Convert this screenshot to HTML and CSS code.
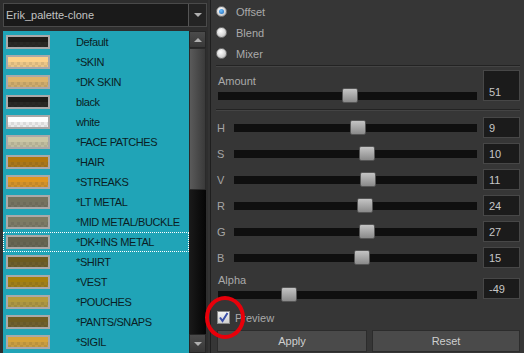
FILE: index.html
```html
<!DOCTYPE html>
<html>
<head>
<meta charset="utf-8">
<link rel="stylesheet" href="styles.css">
</head>
<body>
<div class="app">
  <div class="left">
    <div class="combo">
      <span class="combo-text">Erik_palette-clone</span>
      <span class="combo-btn"><span class="tri-down"></span></span>
    </div>
    <div class="listwrap">
      <div class="list">
        <div class="row"><span class="sw" style="--c:#1d1c18"></span><span class="name">Default</span></div>
        <div class="row"><span class="sw" style="--c:#fdd28a"></span><span class="name">*SKIN</span></div>
        <div class="row"><span class="sw" style="--c:#ddb46b"></span><span class="name">*DK SKIN</span></div>
        <div class="row"><span class="sw" style="--c:#1d1c18"></span><span class="name">black</span></div>
        <div class="row"><span class="sw" style="--c:#ffffff"></span><span class="name">white</span></div>
        <div class="row"><span class="sw" style="--c:#cbc7a5"></span><span class="name">*FACE PATCHES</span></div>
        <div class="row"><span class="sw" style="--c:#b1770d"></span><span class="name">*HAIR</span></div>
        <div class="row"><span class="sw" style="--c:#e0961f"></span><span class="name">*STREAKS</span></div>
        <div class="row"><span class="sw" style="--c:#75735e"></span><span class="name">*LT METAL</span></div>
        <div class="row"><span class="sw" style="--c:#7d7b63"></span><span class="name">*MID METAL/BUCKLE</span></div>
        <div class="row selected"><span class="sw" style="--c:#65634f"></span><span class="name">*DK+INS METAL</span></div>
        <div class="row"><span class="sw" style="--c:#6c5b20"></span><span class="name">*SHIRT</span></div>
        <div class="row"><span class="sw" style="--c:#a6800c"></span><span class="name">*VEST</span></div>
        <div class="row"><span class="sw" style="--c:#b49b3c"></span><span class="name">*POUCHES</span></div>
        <div class="row"><span class="sw" style="--c:#6e5c22"></span><span class="name">*PANTS/SNAPS</span></div>
        <div class="row"><span class="sw" style="--c:#d6a43a"></span><span class="name">*SIGIL</span></div>
      </div>
      <div class="scroll">
        <div class="sbtn"><span class="tri-up"></span></div>
        <div class="thumb"></div>
        <div class="track"></div>
        <div class="sbtn"><span class="tri-down"></span></div>
      </div>
    </div>
  </div>

  <div class="right">
    <div class="radios">
      <div class="radio-row"><span class="radio checked"></span><span class="lbl">Offset</span></div>
      <div class="radio-row"><span class="radio"></span><span class="lbl">Blend</span></div>
      <div class="radio-row"><span class="radio"></span><span class="lbl">Mixer</span></div>
    </div>
    <div class="sep"></div>

    <div class="block amount">
      <div class="blk-left">
        <div class="blk-label">Amount</div>
        <div class="slider"><span class="knob" style="left:124px"></span></div>
      </div>
      <div class="val tall">51</div>
    </div>
    <div class="sep sep2"></div>

    <div class="chans">
      <div class="chan"><span class="ch">H</span><div class="slider"><span class="knob" style="left:116px"></span></div><div class="val">9</div></div>
      <div class="chan"><span class="ch">S</span><div class="slider"><span class="knob" style="left:125px"></span></div><div class="val">10</div></div>
      <div class="chan"><span class="ch">V</span><div class="slider"><span class="knob" style="left:126px"></span></div><div class="val">11</div></div>
      <div class="chan"><span class="ch">R</span><div class="slider"><span class="knob" style="left:123px"></span></div><div class="val">24</div></div>
      <div class="chan"><span class="ch">G</span><div class="slider"><span class="knob" style="left:125px"></span></div><div class="val">27</div></div>
      <div class="chan"><span class="ch">B</span><div class="slider"><span class="knob" style="left:120px"></span></div><div class="val">15</div></div>
    </div>

    <div class="block alpha">
      <div class="blk-left">
        <div class="blk-label">Alpha</div>
        <div class="slider"><span class="knob" style="left:63px"></span></div>
      </div>
      <div class="val">-49</div>
    </div>

    <div class="preview">
      <span class="check">
        <svg width="11" height="11" viewBox="0 0 11 11"><path d="M2 5.5 L4.5 9 L9.5 1" fill="none" stroke="#3a4fa8" stroke-width="2"/></svg>
      </span>
      <span class="lbl">Preview</span>
      <span class="ring"></span>
    </div>

    <div class="buttons">
      <div class="btn">Apply</div>
      <div class="btn">Reset</div>
    </div>
  </div>
</div>
</body>
</html>
```

FILE: styles.css
```css
* { box-sizing: border-box; }
html, body { margin: 0; padding: 0; }
body {
  width: 524px;
  height: 353px;
  overflow: hidden;
  background: #333333;
  font-family: "Liberation Sans", Arial, sans-serif;
  font-size: 11px;
}
.app {
  display: flex;
  height: 353px;
}

/* ---------- left ---------- */
.left {
  width: 208px;
  padding: 3px 0 0 3px;
  display: flex;
  flex-direction: column;
  gap: 4px;
  background: #2e2e2e;
}
.combo {
  height: 24px;
  width: 204px;
  background: #1a1a1a;
  border: 1px solid #4a4a4a;
  display: flex;
  align-items: center;
}
.combo-text {
  flex: 1;
  color: #c2c2c2;
  padding-left: 2px;
}
.combo-btn {
  width: 18px;
  height: 22px;
  border-left: 1px solid #555;
  background: #242424;
  display: flex;
  align-items: center;
  justify-content: center;
}
.tri-down {
  width: 0; height: 0;
  border-left: 4px solid transparent;
  border-right: 4px solid transparent;
  border-top: 4px solid #b0b0b0;
}
.tri-up {
  width: 0; height: 0;
  border-left: 4px solid transparent;
  border-right: 4px solid transparent;
  border-bottom: 4px solid #b0b0b0;
}
.listwrap {
  flex: 1;
  display: flex;
  min-height: 0;
}
.list {
  width: 186px;
  background: #20a4b7;
  padding-top: 1px;
  overflow: hidden;
}
.row {
  height: 20px;
  display: flex;
  align-items: center;
  padding-left: 3px;
}
.row.selected {
  outline: 1px dotted #ffffff;
  outline-offset: -1px;
}
.sw {
  width: 44px;
  height: 14px;
  border: 2px solid #a9a9a9;
  background: var(--c);
  position: relative;
  flex: none;
}
.sw::after {
  content: "";
  position: absolute;
  left: 0; right: 0; bottom: 0;
  height: 5px;
  background-color: rgba(120,120,120,0.14);
  background-image:
    linear-gradient(45deg, rgba(0,0,0,0.07) 25%, transparent 25%, transparent 75%, rgba(0,0,0,0.07) 75%),
    linear-gradient(45deg, rgba(0,0,0,0.07) 25%, transparent 25%, transparent 75%, rgba(0,0,0,0.07) 75%);
  background-size: 6px 6px;
  background-position: 0 0, 3px 3px;
}
.name {
  margin-left: 26px;
  color: #0b1d24;
  white-space: nowrap;
  letter-spacing: -0.4px;
}
.scroll {
  width: 17px;
  display: flex;
  flex-direction: column;
}
.sbtn {
  height: 17px;
  background: linear-gradient(#4b4b4b, #383838);
  border: 1px solid #262626;
  display: flex;
  align-items: center;
  justify-content: center;
}
.scroll .sbtn:last-child { height: 19px; }
.thumb {
  height: 142px;
  background: linear-gradient(90deg, #5a5a5a, #3a3a3a);
  border: 1px solid #2a2a2a;
}
.track {
  flex: 1;
  background: linear-gradient(90deg, #1a1a1a, #050505);
}

/* ---------- right ---------- */
.right {
  flex: 1;
  margin-left: 2px;
  border-left: 1px solid #1e1e1e;
  background: #363636;
  padding: 1px 4px 0 5px;
  display: flex;
  flex-direction: column;
  color: #ababab;
}
.radios { display: flex; flex-direction: column; }
.radio-row {
  height: 21px;
  display: flex;
  align-items: center;
  gap: 9px;
}
.radio {
  width: 11px;
  height: 11px;
  border-radius: 50%;
  background: radial-gradient(circle at 40% 35%, #ffffff, #d8d8d8 55%, #a8a8a8);
  border: 1px solid #7a7a7a;
  position: relative;
}
.radio.checked::after {
  content: "";
  position: absolute;
  left: 2px; top: 2px;
  width: 5px; height: 5px;
  border-radius: 50%;
  background: radial-gradient(circle at 40% 35%, #6ec0ff, #1a64b4);
}
.lbl { color: #aaaaaa; }

.sep {
  margin-top: 1px;
  height: 2px;
  border-top: 1px solid #232323;
  border-bottom: 1px solid #444444;
}
.sep2 { margin-top: 8px; }

.block {
  display: flex;
  align-items: flex-start;
}
.blk-left {
  flex: 1;
  padding-left: 2px;
}
.blk-label {
  height: 14px;
  line-height: 14px;
  color: #aaaaaa;
}
.amount { margin-top: 2px; height: 32px; }
.amount .blk-label { margin-top: 5px; }
.amount .slider { margin-top: 4px; }

.slider {
  height: 8px;
  background: #0f0f0f;
  position: relative;
}
.knob {
  position: absolute;
  top: -4px;
  width: 16px;
  height: 15px;
  border-radius: 2px;
  border: 1px solid #555;
  background: linear-gradient(#c4c4c4, #8a8a8a);
}
.val {
  width: 37px;
  height: 21px;
  margin-left: 6px;
  background: #1b1b1b;
  border: 1px solid #474747;
  color: #c6c6c6;
  display: flex;
  align-items: center;
  padding-left: 5px;
  flex: none;
}
.val.tall {
  height: 31px;
  margin-top: 1px;
  padding-top: 13px;
}

.chans {
  margin-top: 6px;
  display: flex;
  flex-direction: column;
  gap: 5px;
}
.chan {
  height: 21px;
  display: flex;
  align-items: center;
}
.ch {
  width: 18px;
  padding-left: 1px;
  color: #a5a5a5;
}
.chan .slider { flex: 1; }

.alpha { margin-top: 5px; }
.alpha .slider { margin-top: 4px; }
.alpha .val { margin-top: 5px; }

.preview {
  margin-top: 8px;
  height: 21px;
  display: flex;
  align-items: center;
  gap: 5px;
  position: relative;
  padding-left: 1px;
}
.check {
  width: 13px;
  height: 13px;
  border: 1px solid #8a8a8a;
  background: linear-gradient(#f4f4f4, #cfcfcf);
  display: flex;
  align-items: center;
  justify-content: center;
}
.ring {
  position: absolute;
  left: -11px;
  top: -11px;
  width: 40px;
  height: 43px;
  border: 4px solid #e8000a;
  border-radius: 50%;
}
.buttons {
  margin-top: 2px;
  display: grid;
  grid-template-columns: 150px 1fr;
  gap: 5px;
  padding-left: 1px;
}
.btn {
  height: 22px;
  background: #4a4a4a;
  border: 1px solid #2c2c2c;
  color: #cfcfcf;
  display: flex;
  align-items: center;
  justify-content: center;
  font-size: 11px;
}
```
